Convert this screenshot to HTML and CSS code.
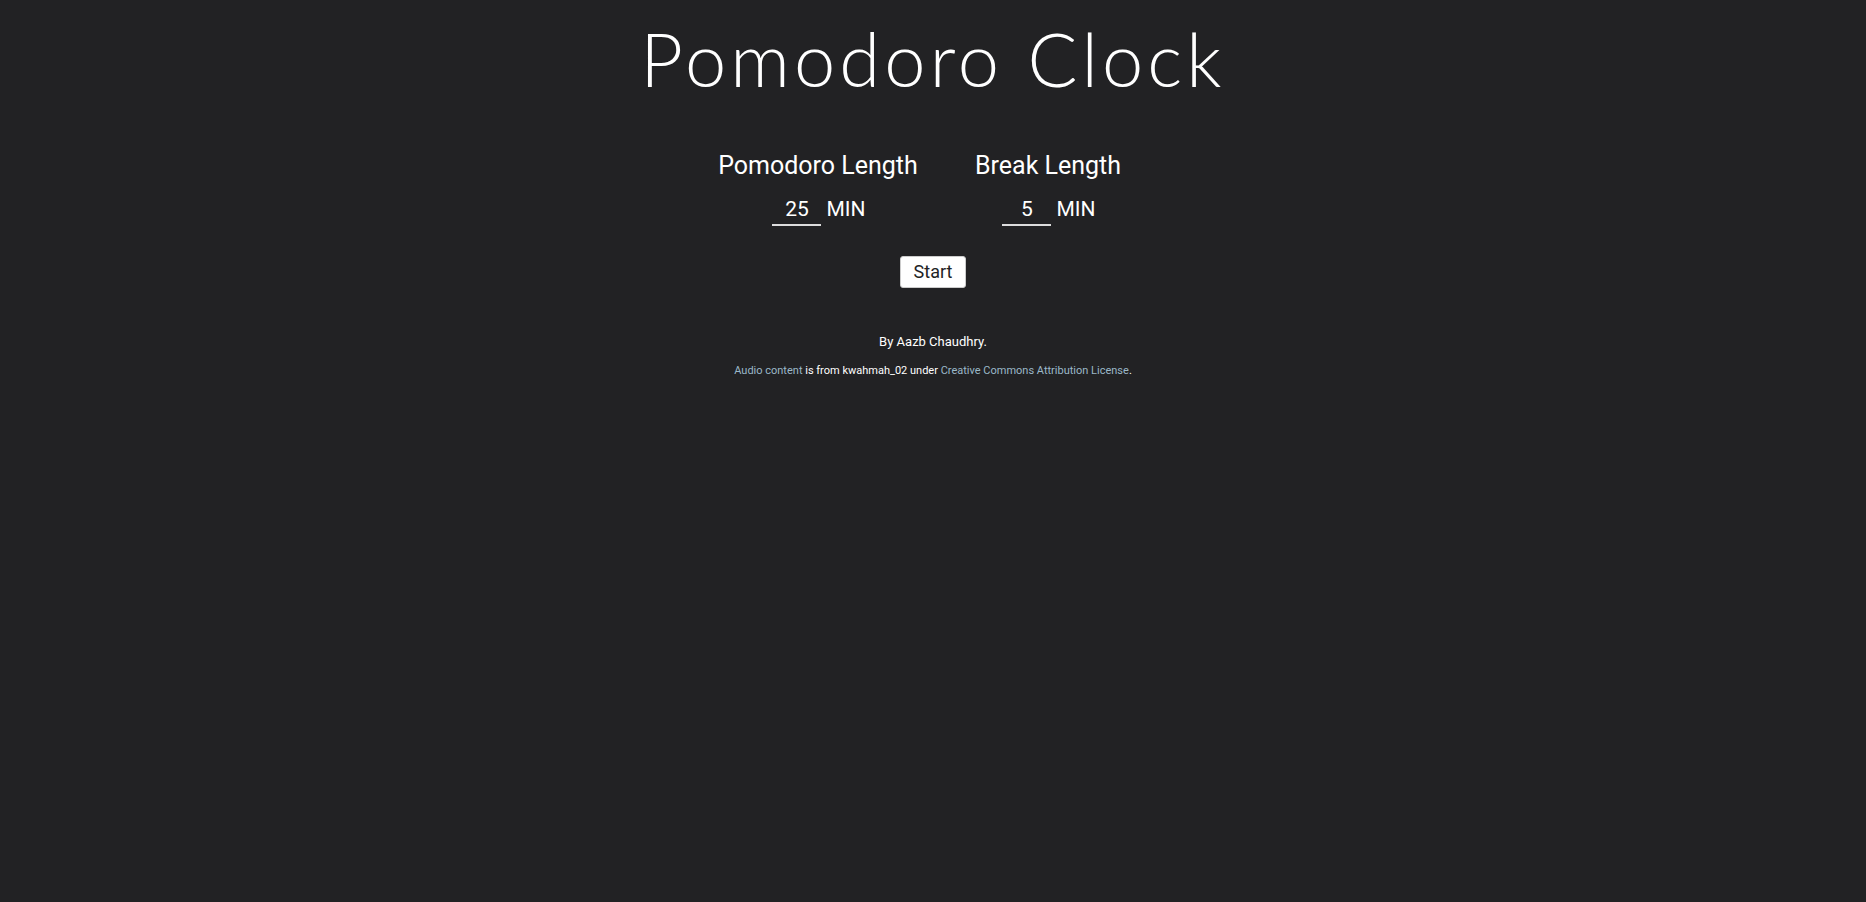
FILE: index.html
```html
<!DOCTYPE html>
<html>
<head>
<meta charset="utf-8">
<link rel="stylesheet" href="styles.css">
</head>
<body>
<div class="page">
  <h1 class="title">Pomodoro Clock</h1>
  <div class="settings">
    <div class="setting">
      <h2 class="setting-label">Pomodoro Length</h2>
      <div class="setting-value">
        <input class="num" type="text" value="25">
        <span class="unit">MIN</span>
      </div>
    </div>
    <div class="setting">
      <h2 class="setting-label">Break Length</h2>
      <div class="setting-value">
        <input class="num" type="text" value="5">
        <span class="unit">MIN</span>
      </div>
    </div>
  </div>
  <button class="start">Start</button>
  <p class="byline">By Aazb Chaudhry.</p>
  <p class="credits"><a href="#">Audio content</a> is from kwahmah_02 under <a href="#">Creative Commons Attribution License</a>.</p>
</div>
</body>
</html>
```
FILE: styles.css
```css
html, body {
  margin: 0;
  padding: 0;
  background: #222224;
  color: #ffffff;
  font-family: Roboto, "Liberation Sans", sans-serif;
}
.page {
  display: flex;
  flex-direction: column;
  align-items: center;
}
.title {
  font-family: Lato, "Open Sans", sans-serif;
  font-weight: 300;
  font-size: 74px;
  letter-spacing: 4.1px;
  line-height: 1;
  margin: 22px 0 0 0;
}
.settings {
  display: flex;
  margin-top: 55px;
}
.setting {
  width: 230px;
  display: flex;
  flex-direction: column;
  align-items: center;
}
.setting-label {
  font-weight: 400;
  font-size: 25px;
  line-height: 30px;
  margin: 0;
}
.setting-value {
  display: flex;
  align-items: flex-end;
  gap: 5px;
  margin-top: 16px;
  padding-left: 2px;
}
.num {
  width: 49px;
  box-sizing: border-box;
  background: transparent;
  border: none;
  border-bottom: 2px solid #dddddd;
  color: #ffffff;
  font-family: Roboto, "Liberation Sans", sans-serif;
  font-size: 21px;
  text-align: center;
  padding: 0 0 3px 0;
  outline: none;
}
.unit {
  font-size: 21px;
  padding-bottom: 5px;
}
.start {
  margin-top: 30px;
  background: #ffffff;
  color: #222224;
  border: 1px solid #cccccc;
  border-radius: 3px;
  font-family: Roboto, "Liberation Sans", sans-serif;
  font-size: 18px;
  line-height: 1;
  width: 66px;
  height: 32px;
  padding: 0;
}
.byline {
  font-size: 13px;
  margin: 46px 0 0 0;
}
.credits {
  font-size: 11px;
  margin: 15px 0 0 0;
}
.credits a {
  color: #9bb8c8;
  text-decoration: none;
}
```
